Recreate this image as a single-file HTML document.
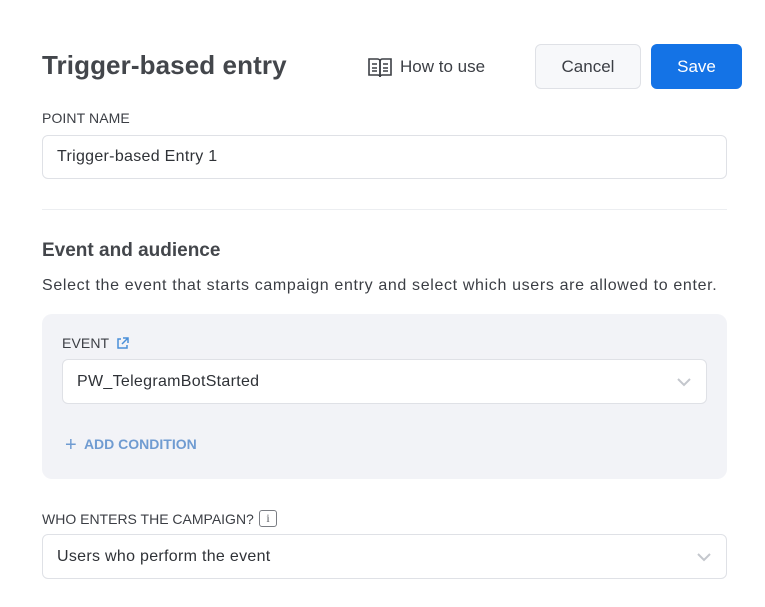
<!DOCTYPE html>
<html><head><style>
*{box-sizing:border-box;margin:0;padding:0}
body{width:765px;height:607px;background:#fff;font-family:"Liberation Sans",sans-serif;color:#2f3237;position:relative;overflow:hidden}
.a{position:absolute}
.lbl{font-size:14px;color:#3b3e44;letter-spacing:0.1px}
.inp{border:1px solid #dfe1e6;border-radius:6px;background:#fff;font-size:16px;color:#2f3237;padding-left:14px;display:flex;align-items:center;letter-spacing:0.3px}
.chev{position:absolute;right:14px;top:50%;margin-top:-5px}
</style></head><body>
<div class="a" style="left:42px;top:50px;font-size:26px;font-weight:bold;color:#43464b;letter-spacing:0.1px">Trigger-based entry</div>
<svg class="a" style="left:368px;top:57px" width="24" height="22" viewBox="0 0 24 22" fill="none" stroke="#3b3e44" stroke-width="1.6"><path d="M1 2h8.5c1.5 0 2.5 1 2.5 2.5V20c0-1.2-1-2-2.2-2H1z"/><path d="M23 2h-8.5C13 2 12 3 12 4.5V20c0-1.2 1-2 2.2-2H23z"/><path d="M4 7h5M4 11h5M4 14h5M15 7h5M15 11h5M15 14h5"/></svg>
<div class="a" style="left:400px;top:57px;font-size:17px;color:#3b3e44">How to use</div>
<div class="a" style="left:535px;top:44px;width:106px;height:45px;border:1px solid #dfe1e6;border-radius:6px;background:#f7f8fa;font-size:17px;color:#3b3e44;display:flex;align-items:center;justify-content:center">Cancel</div>
<div class="a" style="left:651px;top:44px;width:91px;height:45px;border-radius:6px;background:#1473e6;font-size:17px;color:#fff;display:flex;align-items:center;justify-content:center">Save</div>
<div class="a lbl" style="left:42px;top:110px">POINT NAME</div>
<div class="a inp" style="left:42px;top:135px;width:685px;height:44px">Trigger-based Entry 1</div>
<div class="a" style="left:42px;top:209px;width:685px;height:1px;background:#eceef1"></div>
<div class="a" style="left:42px;top:240px;font-size:19px;font-weight:bold;color:#43464b">Event and audience</div>
<div class="a" style="left:42px;top:277px;font-size:16px;color:#3b3e44;letter-spacing:0.65px">Select the event that starts campaign entry and select which users are allowed to enter.</div>
<div class="a" style="left:42px;top:314px;width:685px;height:165px;background:#f2f3f7;border-radius:10px"></div>
<div class="a lbl" style="left:62px;top:335px">EVENT</div>
<svg class="a" style="left:116px;top:337px" width="13" height="13" viewBox="0 0 13 13" fill="none" stroke="#4a90d9" stroke-width="1.5"><path d="M5 2H2v9h9V8M7 1h5v5M12 1L6 7"/></svg>
<div class="a inp" style="left:62px;top:359px;width:645px;height:45px">PW_TelegramBotStarted<svg class="chev" width="16" height="10" viewBox="0 0 16 10" fill="none" stroke="#c4c7cd" stroke-width="2"><path d="M2 2l6 6 6-6"/></svg></div>
<div class="a" style="left:65px;top:432px;font-size:14px;font-weight:bold;color:#6f9bd1"><span style="font-size:20px;font-weight:normal;position:relative;top:2px">+</span>&nbsp; ADD CONDITION</div>
<div class="a lbl" style="left:42px;top:511px;letter-spacing:0">WHO ENTERS THE CAMPAIGN?</div>
<div class="a" style="left:259px;top:510px;width:18px;height:17px;border:1.3px solid #7a7d83;border-radius:3px;font-size:12px;color:#5a5d63;text-align:center;line-height:15px;font-family:'Liberation Serif',serif">i</div>
<div class="a inp" style="left:42px;top:534px;width:685px;height:45px">Users who perform the event<svg class="chev" width="16" height="10" viewBox="0 0 16 10" fill="none" stroke="#c4c7cd" stroke-width="2"><path d="M2 2l6 6 6-6"/></svg></div>
</body></html>
